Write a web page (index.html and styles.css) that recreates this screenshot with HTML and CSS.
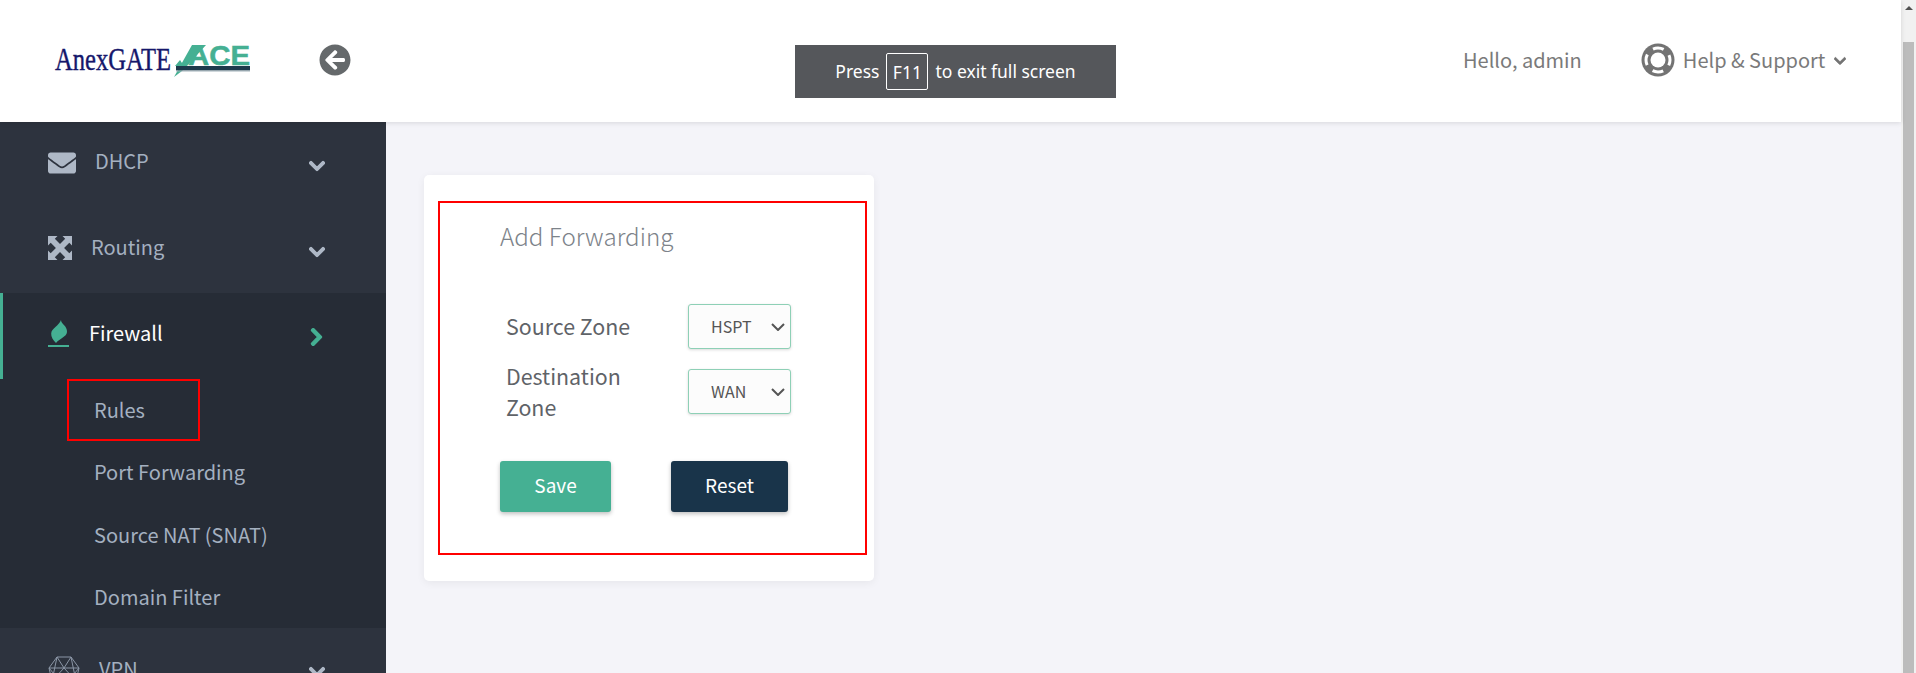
FILE: index.html
```html
<!DOCTYPE html>
<html lang="en">
<head>
    <meta charset="UTF-8">
    <meta name="viewport" content="width=device-width, initial-scale=1.0">
    <title>Add Forwarding</title>
    <link rel="stylesheet" href="styles.css">
</head>
<body>
    <div class="app">
        <div class="page">
            <!-- Top bar -->
            <header class="topbar">
                <svg class="logo" viewBox="0 0 200 44" width="200" height="44">
                    <text x="1" y="32" class="logo-name" textLength="116" lengthAdjust="spacingAndGlyphs">AnexGATE</text>
                    <polygon points="120,39 138,7 152,7 133,28 128,33" fill="#45b093"/>
                    <polygon points="121,28 126,22 130,28" fill="#45b093"/>
                    <text x="134" y="27" class="logo-ace" textLength="62" lengthAdjust="spacingAndGlyphs">ACE</text>
                    <rect x="122" y="28" width="74" height="4.5" fill="#1e3a4c"/>
                    <rect x="122" y="32.5" width="74" height="1" fill="#9fb0b8"/>
                </svg>
                <svg class="back-icon" viewBox="0 0 512 512" width="32" height="32"><path d="M256 504C119 504 8 393 8 256S119 8 256 8s248 111 248 248-111 248-248 248zm28.9-143.6L209.4 288H392c13.3 0 24-10.7 24-24v-16c0-13.3-10.7-24-24-24H209.4l75.5-72.4c9.7-9.3 9.9-24.8.4-34.3l-11-10.9c-9.4-9.4-24.6-9.4-33.9 0L107.7 239c-9.4 9.4-9.4 24.6 0 33.9l132.7 132.7c9.4 9.4 24.6 9.4 33.9 0l11-10.9c9.5-9.5 9.3-25-.4-34.3z"/></svg>
                <div class="fullscreen-note">Press <span class="key">F11</span> to exit full screen</div>
                <div class="hello">Hello, admin</div>
                <div class="help">
                    <svg class="help-icon" viewBox="0 0 34 34" width="34" height="34">
                        <circle cx="17" cy="17" r="16.5" fill="#737373"/>
                        <circle class="ring-gaps" cx="17" cy="17" r="12"/>
                        <circle cx="17" cy="17" r="7.5" fill="#fff"/>
                    </svg>
                    <span>Help &amp; Support</span>
                    <svg class="help-caret" viewBox="0 0 448 512" width="12" height="14"><path d="M207.029 381.476L12.686 187.132c-9.373-9.373-9.373-24.569 0-33.941l22.667-22.667c9.357-9.357 24.522-9.375 33.901-.04L224 284.505l154.745-154.021c9.379-9.335 24.544-9.317 33.901.04l22.667 22.667c9.373 9.373 9.373 24.569 0 33.941L240.971 381.476c-9.373 9.372-24.569 9.372-33.942 0z"/></svg>
                </div>
            </header>

            <div class="main">
                <!-- Sidebar -->
                <nav class="sidebar">
                    <div class="nav-item">
                        <svg class="nav-icon" viewBox="0 0 512 512" width="28" height="28"><path d="M502.3 190.8c3.9-3.1 9.7-.2 9.7 4.7V400c0 26.5-21.5 48-48 48H48c-26.5 0-48-21.5-48-48V195.6c0-5 5.7-7.8 9.7-4.7 22.4 17.4 52.1 39.5 154.1 113.6 21.1 15.4 56.7 47.8 92.2 47.6 35.7.3 72-32.8 92.3-47.6 102-74.1 131.6-96.3 154-113.7zM256 320c23.2.4 56.6-29.2 73.4-41.4 132.7-96.3 142.8-104.7 173.4-128.7 5.8-4.5 9.2-11.5 9.2-18.9v-19c0-26.5-21.5-48-48-48H48C21.5 64 0 85.5 0 112v19c0 7.4 3.4 14.3 9.2 18.9 30.6 23.9 40.7 32.4 173.4 128.7 16.8 12.2 50.2 41.8 73.4 41.4z"/></svg>
                        <span class="nav-label label-dhcp">DHCP</span>
                        <svg class="nav-caret" viewBox="0 0 448 512" width="16" height="18"><path d="M207.029 381.476L12.686 187.132c-9.373-9.373-9.373-24.569 0-33.941l22.667-22.667c9.357-9.357 24.522-9.375 33.901-.04L224 284.505l154.745-154.021c9.379-9.335 24.544-9.317 33.901.04l22.667 22.667c9.373 9.373 9.373 24.569 0 33.941L240.971 381.476c-9.373 9.372-24.569 9.372-33.942 0z"/></svg>
                    </div>
                    <div class="nav-item">
                        <svg class="nav-icon icon-routing" viewBox="0 0 24 24" width="24" height="24"><path d="M0 0h9.5L6.8 2.7 12 7.9l5.2-5.2L14.5 0H24v9.5l-2.7-2.7L16.1 12l5.2 5.2 2.7-2.7V24h-9.5l2.7-2.7L12 16.1l-5.2 5.2L9.5 24H0v-9.5l2.7 2.7L7.9 12 2.7 6.8 0 9.5z"/></svg>
                        <span class="nav-label label-routing">Routing</span>
                        <svg class="nav-caret" viewBox="0 0 448 512" width="16" height="18"><path d="M207.029 381.476L12.686 187.132c-9.373-9.373-9.373-24.569 0-33.941l22.667-22.667c9.357-9.357 24.522-9.375 33.901-.04L224 284.505l154.745-154.021c9.379-9.335 24.544-9.317 33.901.04l22.667 22.667c9.373 9.373 9.373 24.569 0 33.941L240.971 381.476c-9.373 9.372-24.569 9.372-33.942 0z"/></svg>
                    </div>
                    <div class="nav-item nav-open">
                        <svg class="nav-icon icon-firewall" viewBox="0 0 22 28" width="22" height="28"><path d="M13 0C13 4 19.5 6 19 12 18.5 17 12 18 8 23 5 20 3 17 3.2 13.5 3.5 8 11 6 13 0z"/><rect x="0" y="25" width="21" height="2"/></svg>
                        <span class="nav-label label-firewall">Firewall</span>
                        <svg class="nav-caret caret-right" viewBox="0 0 320 512" width="13" height="20"><path d="M285.476 272.971L91.132 467.314c-9.373 9.373-24.569 9.373-33.941 0l-22.667-22.667c-9.357-9.357-9.375-24.522-.04-33.901L188.505 256 34.484 101.255c-9.335-9.379-9.317-24.544.04-33.901l22.667-22.667c9.373-9.373 24.569-9.373 33.941 0L285.475 239.03c9.373 9.372 9.373 24.568.001 33.941z"/></svg>
                    </div>
                    <div class="submenu">
                        <a class="sub-item sub-marked">Rules</a>
                        <a class="sub-item">Port Forwarding</a>
                        <a class="sub-item">Source NAT (SNAT)</a>
                        <a class="sub-item">Domain Filter</a>
                    </div>
                    <div class="nav-item">
                        <svg class="nav-icon icon-vpn" viewBox="0 0 32 32" width="32" height="32"><path d="M9 2h14l8 11-3 13-12 5-12-5-3-13zM1 13h30M9 2l7 11 7-11M4 26l12-13 12 13M9 2L4 26M23 2l5 24M1 13l15 18 15-18"/></svg>
                        <span class="nav-label label-vpn">VPN</span>
                        <svg class="nav-caret" viewBox="0 0 448 512" width="16" height="18"><path d="M207.029 381.476L12.686 187.132c-9.373-9.373-9.373-24.569 0-33.941l22.667-22.667c9.357-9.357 24.522-9.375 33.901-.04L224 284.505l154.745-154.021c9.379-9.335 24.544-9.317 33.901.04l22.667 22.667c9.373 9.373 9.373 24.569 0 33.941L240.971 381.476c-9.373 9.372-24.569 9.372-33.942 0z"/></svg>
                    </div>
                </nav>

                <!-- Content -->
                <div class="content">
                    <div class="card">
                        <div class="form-box">
                            <h2 class="form-title">Add Forwarding</h2>
                            <div class="form-row">
                                <label class="form-label">Source Zone</label>
                                <select class="zone-select"><option>HSPT</option></select>
                            </div>
                            <div class="form-row row-dest">
                                <label class="form-label">Destination Zone</label>
                                <select class="zone-select"><option>WAN</option></select>
                            </div>
                            <div class="form-buttons">
                                <button class="btn btn-save">Save</button>
                                <button class="btn btn-reset">Reset</button>
                            </div>
                        </div>
                    </div>
                </div>
            </div>
        </div>

        <!-- Scrollbar -->
        <div class="scrollbar">
            <div class="scroll-arrow"></div>
            <div class="scroll-thumb"></div>
        </div>
    </div>
</body>
</html>
```

FILE: styles.css
```css
html, body {
    height: 100%;
}
body {
    font-family: "Noto Sans CJK JP", "Noto Sans", sans-serif;
    margin: 0;
    overflow: hidden;
    background-color: #f4f4f9;
}
.app {
    display: flex;
    height: 673px;
    overflow: hidden;
}
.page {
    flex: 1;
    min-width: 0;
    display: flex;
    flex-direction: column;
}

/* Top bar */
.topbar {
    height: 122px;
    flex: none;
    display: flex;
    align-items: center;
    background: #fff;
    box-shadow: 0 1px 5px rgba(0, 0, 0, 0.12);
    position: relative;
    z-index: 2;
}
.logo {
    margin-left: 54px;
    margin-bottom: 2px;
    flex: none;
}
.logo-name {
    font-family: "Liberation Serif", serif;
    font-size: 31px;
    fill: #15176b;
    stroke: #15176b;
    stroke-width: 0.4;
}
.logo-ace {
    font-family: "Liberation Sans", sans-serif;
    font-size: 28px;
    font-weight: bold;
    fill: #45b093;
    stroke: #45b093;
    stroke-width: 0.5;
}
.back-icon {
    margin-left: 65px;
    margin-bottom: 2px;
    fill: #65696b;
}
.fullscreen-note {
    margin-left: 444px;
    margin-top: 21px;
    width: 321px;
    height: 53px;
    box-sizing: border-box;
    padding-bottom: 2px;
    display: flex;
    align-items: center;
    justify-content: center;
    gap: 7px;
    background: #55575b;
    color: #fff;
    font-family: "Noto Sans", sans-serif;
    font-size: 17.5px;
}
.key {
    width: 40px;
    height: 35px;
    margin-top: 2px;
    display: flex;
    align-items: center;
    justify-content: center;
    border: 1px solid #fff;
    border-radius: 2px;
}
.hello {
    margin-left: 347px;
    margin-bottom: 3px;
    font-size: 20px;
    color: #7a7a7a;
}
.help {
    margin-left: 59px;
    margin-bottom: 3px;
    display: flex;
    align-items: center;
    font-size: 20px;
    color: #7a7a7a;
}
.help-icon {
    margin-right: 8px;
}
.ring-gaps {
    fill: none;
    stroke: #fff;
    stroke-width: 3;
    stroke-dasharray: 11 7.85;
    stroke-dashoffset: 5.5;
}
.help-caret {
    fill: #737373;
    stroke: #737373;
    stroke-width: 30;
    margin-left: 9px;
    margin-top: 3px;
}

/* Sidebar */
.main {
    flex: 1;
    min-height: 0;
    display: flex;
}
.sidebar {
    width: 386px;
    flex: none;
    background: #2d333e;
    overflow: hidden;
}
.nav-item {
    height: 85.5px;
    display: flex;
    align-items: center;
    padding-left: 48px;
    padding-bottom: 4px;
    box-sizing: border-box;
    position: relative;
}
.nav-icon {
    fill: #aeb8c6;
    flex: none;
}
.nav-label {
    font-size: 20px;
    color: #a4b0c0;
    margin-bottom: 1px;
}
.label-dhcp {
    margin-left: 19px;
    margin-top: -3px;
}
.label-routing {
    margin-left: 19px;
    margin-top: -3px;
}
.label-firewall {
    margin-left: 19px;
    margin-top: -3px;
    color: #fff;
}
.label-vpn {
    margin-left: 19px;
}
.nav-caret {
    fill: #aeb8c6;
    stroke: #aeb8c6;
    stroke-width: 30;
    position: absolute;
    left: 309px;
    top: 35px;
}
.caret-right {
    fill: #45b093;
    stroke: #45b093;
    left: 310px;
    top: 34px;
}
.nav-open {
    height: 86px;
    background: #262c36;
    border-left: 3px solid #45b093;
    padding-left: 45px;
}
.nav-open .nav-caret {
    left: 307px;
}
.icon-firewall {
    fill: #45b093;
}
.icon-vpn {
    fill: none;
    stroke: #8b96a6;
    stroke-width: 1;
    margin-top: 4px;
}
.submenu {
    height: 249px;
    background: #262c36;
}
.sub-item {
    display: block;
    height: 62.25px;
    line-height: 61px;
    padding-left: 94px;
    font-size: 20px;
    color: #a4b0c0;
    box-sizing: border-box;
}
.sub-marked {
    width: 133px;
    margin-left: 67px;
    padding-left: 25px;
    border: 2px solid #f00;
    line-height: 57px;
}

/* Form card */
.content {
    flex: 1;
    padding: 53px 0 0 38px;
}
.card {
    width: 450px;
    height: 406px;
    box-sizing: border-box;
    padding: 26px 7px 0 14px;
    background: #fff;
    border-radius: 5px;
    box-shadow: 0 2px 8px rgba(0, 0, 0, 0.06);
}
.form-box {
    height: 354px;
    box-sizing: border-box;
    border: 2px solid #f00;
    padding: 15px 0 0 60px;
}
.form-title {
    margin: 0;
    font-size: 24.2px;
    font-weight: 300;
    line-height: 36px;
    color: #7d838a;
}
.form-row {
    display: flex;
    align-items: center;
    height: 45px;
    margin-top: 50px;
    padding-left: 6px;
}
.row-dest {
    margin-top: 20px;
}
.form-label {
    width: 182px;
    flex: none;
    font-size: 21.4px;
    line-height: 31px;
    color: #5f6368;
    margin-bottom: 3px;
}
.row-dest .form-label {
    width: 150px;
    margin-right: 32px;
    margin-bottom: 1px;
}
.zone-select {
    width: 103px;
    height: 45px;
    padding-left: 22px;
    padding-bottom: 2px;
    font-family: inherit;
    font-size: 16px;
    color: #555;
    background-color: #fcfcfc;
    background-image: url("data:image/svg+xml,%3Csvg xmlns='http://www.w3.org/2000/svg' width='14' height='8' viewBox='0 0 14 8'%3E%3Cpath d='M1 1l6 6 6-6' fill='none' stroke='%23555' stroke-width='2'/%3E%3C/svg%3E");
    background-repeat: no-repeat;
    background-position: right 5px center;
    border: 1px solid #8ed0b6;
    border-radius: 3px;
    box-shadow: 0 1px 3px rgba(0, 0, 0, 0.15);
    appearance: none;
}
.form-buttons {
    display: flex;
    gap: 60px;
    margin-top: 47px;
}
.btn {
    height: 51px;
    border: none;
    border-radius: 3px;
    font-family: inherit;
    font-size: 19px;
    padding-bottom: 6px;
    color: #fff;
    box-shadow: 0 2px 4px rgba(0, 0, 0, 0.25);
}
.btn-save {
    width: 111px;
    background: #45b093;
}
.btn-reset {
    width: 117px;
    background: #19344a;
}

/* Scrollbar */
.scrollbar {
    width: 15px;
    flex: none;
    background: #f1f1f1;
    display: flex;
    flex-direction: column;
    align-items: center;
}
.scroll-arrow {
    margin-top: 6px;
    border-left: 4px solid transparent;
    border-right: 4px solid transparent;
    border-bottom: 4px solid #505050;
}
.scroll-thumb {
    width: 11px;
    margin-top: 32px;
    flex: 1;
    background: #bcbcbc;
}
```
